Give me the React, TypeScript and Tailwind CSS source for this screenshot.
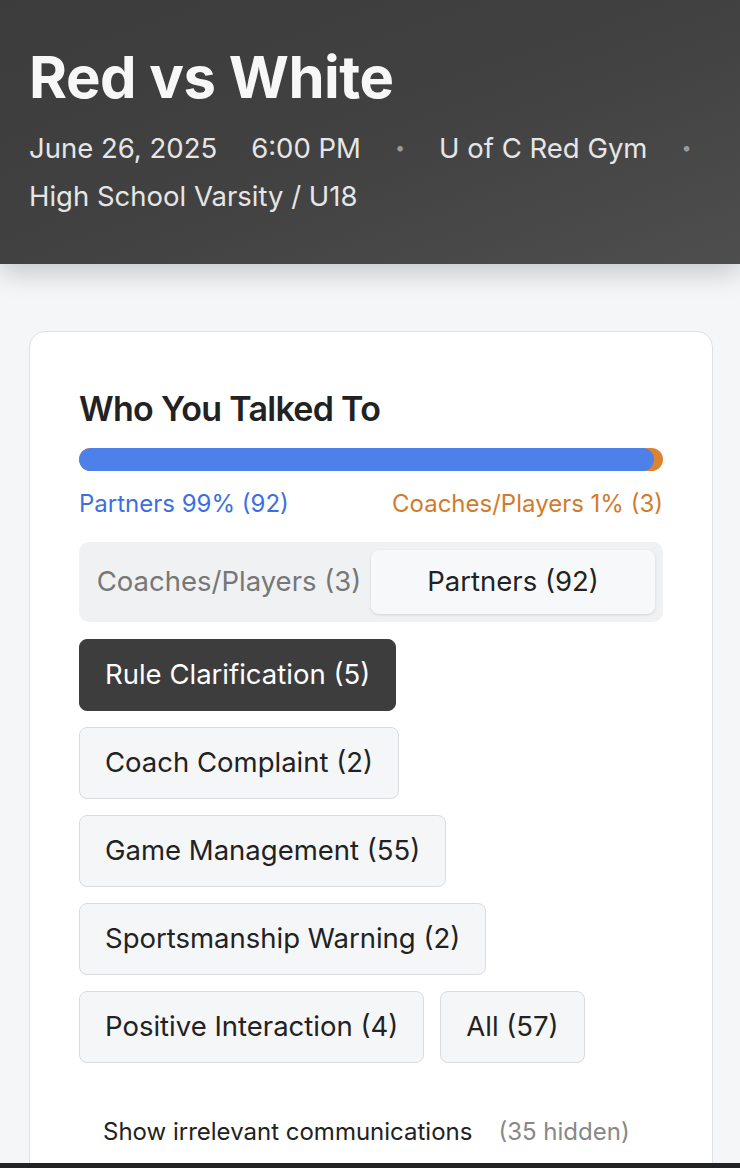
export default function App() {
  const chips = [
    { label: 'Rule Clarification (5)', active: true },
    { label: 'Coach Complaint (2)', active: false },
    { label: 'Game Management (55)', active: false },
    { label: 'Sportsmanship Warning (2)', active: false },
    { label: 'Positive Interaction (4)', active: false },
    { label: 'All (57)', active: false },
  ];

  return (
    <div className="min-h-screen bg-[#f5f6f8] font-['Inter',sans-serif] flex flex-col">
      {/* Header */}
      <div className="relative z-10 h-[264px] bg-gradient-to-br from-[#3c3c3c] via-[#414141] to-[#4e4e4e] px-[29px] pt-[43px] shadow-[0_10px_24px_rgba(0,0,0,0.18)]">
        <h1 className="text-[58px] leading-[68px] font-bold text-[#f7f7f7] tracking-[-0.5px]">Red vs White</h1>
        <div className="mt-[13px] flex flex-wrap items-center gap-x-[34px] text-[27.5px] leading-[48px] text-[#e6e6e6]">
          <span>June 26, 2025</span>
          <span>6:00 PM</span>
          <span className="text-[#9a9a9a] text-[18px]">•</span>
          <span>U of C Red Gym</span>
          <span className="text-[#9a9a9a] text-[18px]">•</span>
          <span>High School Varsity / U18</span>
        </div>
      </div>

      {/* Card */}
      <div className="flex-1 pl-[29px] pr-[27px] pt-[67px]">
        <div className="bg-white border border-[#dfe1e4] rounded-2xl px-[49px] pt-[55px] pb-[60px]">
          <h2 className="text-[34px] leading-[44px] font-semibold text-[#222] tracking-[-0.7px]">Who You Talked To</h2>

          <div className="mt-[17px] h-[23px] rounded-full bg-[#dd8430] overflow-hidden flex">
            <div className="h-full bg-[#4e80ea] rounded-full" style={{ width: '98.5%' }} />
          </div>
          <div className="mt-[17px] flex justify-between text-[24px] leading-[32px]">
            <span className="text-[#3b6fe3]">Partners 99% (92)</span>
            <span className="text-[#d27b2e]">Coaches/Players 1% (3)</span>
          </div>

          {/* Tabs */}
          <div className="mt-[22px] grid grid-cols-2 bg-[#f0f1f3] rounded-[10px] p-[8px]">
            <button className="h-[64px] text-[27.5px] text-[#777]">Coaches/Players (3)</button>
            <button className="h-[64px] text-[27.5px] text-[#222] bg-[#f7f8fa] rounded-[8px] shadow-[0_1px_3px_rgba(0,0,0,0.12)]">
              Partners (92)
            </button>
          </div>

          {/* Chips */}
          <div className="mt-[17px] flex flex-wrap gap-4">
            {chips.map((c) => (
              <button
                key={c.label}
                className={`h-[72px] px-[25px] rounded-[8px] text-[27.5px] ${
                  c.active
                    ? 'bg-[#3d3d3d] text-white border border-[#3d3d3d]'
                    : 'bg-[#f5f6f8] text-[#222] border border-[#d9dbde]'
                }`}
              >
                {c.label}
              </button>
            ))}
          </div>

          <div className="mt-[53px] pl-[24px] flex items-center gap-[26px] text-[24px] leading-[32px]">
            <span className="text-[#222]">Show irrelevant communications</span>
            <span className="text-[#888]">(35 hidden)</span>
          </div>
        </div>
      </div>
      <div className="fixed bottom-0 left-0 right-0 h-[5px] bg-[#222]" />
    </div>
  );
}
